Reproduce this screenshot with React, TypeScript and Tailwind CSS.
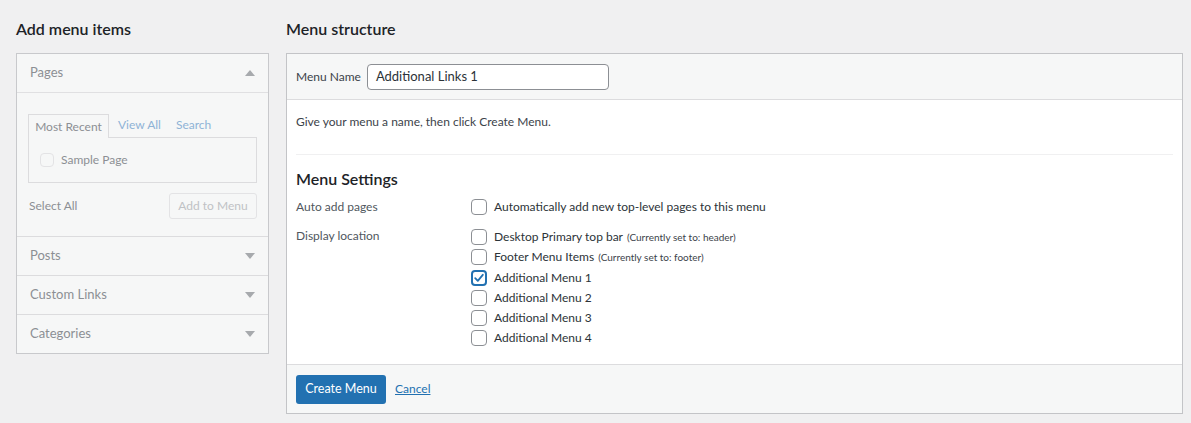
import React from "react";

const font = { fontFamily: 'Lato, "Noto Sans", sans-serif' };

const Caret = ({ up }: { up?: boolean }) => (
  <svg width="10" height="6" viewBox="0 0 10 6" className="text-[#a7aaad]">
    {up ? <path d="M0 6 L5 0 L10 6 Z" fill="currentColor" /> : <path d="M0 0 L10 0 L5 6 Z" fill="currentColor" />}
  </svg>
);

const Checkbox = ({ checked }: { checked?: boolean }) => (
  <span
    className={`w-4 h-4 shrink-0 rounded-[4px] bg-white flex items-center justify-center ${
      checked ? "border-2 border-[#2271b1]" : "border border-[#8c8f94]"
    }`}
  >
    {checked && (
      <svg width="12" height="12" viewBox="0 0 12 12">
        <path d="M2.2 6.2 L4.8 8.8 L9.8 2.8" fill="none" stroke="#2271b1" strokeWidth="1.8" strokeLinecap="round" strokeLinejoin="round" />
      </svg>
    )}
  </span>
);

const locations = [
  { label: "Desktop Primary top bar", note: "(Currently set to: header)" },
  { label: "Footer Menu Items", note: "(Currently set to: footer)" },
  { label: "Additional Menu 1", checked: true },
  { label: "Additional Menu 2" },
  { label: "Additional Menu 3" },
  { label: "Additional Menu 4" },
];

export default function App() {
  return (
    <div className="w-[1191px] h-[423px] bg-[#f0f0f1] text-[#2c3338] text-[12px] flex pl-4 pr-2 overflow-hidden" style={font}>
      {/* Left column */}
      <div className="w-[253px] shrink-0">
        <h2 className="text-[16px] font-semibold text-[#1d2327] h-[53px] pt-[19px] leading-[20px]">Add menu items</h2>
        <div className="border border-[#c8c9cc] bg-[#f6f7f7] text-[#8c8f94]">
          <div className="h-[39px] px-[13px] flex items-center justify-between border-b border-[#e0e0e2]">
            <span className="text-[13px]">Pages</span>
            <Caret up />
          </div>
          <div className="px-[11px] pt-[21px] pb-[17px] border-b border-[#dcdcde]">
            <div className="flex items-end">
              <div className="h-[24px] w-[81px] border border-b-0 border-[#dcdcde] bg-[#f6f7f7] flex items-center justify-center -mb-px relative z-10">Most Recent</div>
              <span className="ml-[9px] mb-[3px] text-[#8fb3d6]">View All</span>
              <span className="ml-[15px] mb-[3px] text-[#8fb3d6]">Search</span>
            </div>
            <div className="h-[46px] border border-[#dcdcde] px-[11px] flex items-center">
              <span className="w-[14px] h-[14px] rounded-[4px] border border-[#e3e3e5] bg-[#f6f7f7]" />
              <span className="ml-[7px]">Sample Page</span>
            </div>
            <div className="mt-[10px] flex items-center justify-between">
              <span className="ml-px">Select All</span>
              <span className="h-[26px] w-[88px] border border-[#e3e3e5] rounded-[3px] bg-[#f6f7f7] text-[#c0c2c5] flex items-center justify-center">Add to Menu</span>
            </div>
          </div>
          {["Posts", "Custom Links", "Categories"].map((t, i) => (
            <div key={t} className={`px-[13px] flex items-center justify-between ${i < 2 ? "h-[39px] border-b border-[#dcdcde]" : "h-[38px]"}`}>
              <span className="text-[13px]">{t}</span>
              <Caret />
            </div>
          ))}
        </div>
      </div>

      {/* Right column */}
      <div className="flex-1 ml-[17px]">
        <h2 className="text-[16px] font-semibold text-[#1d2327] h-[53px] pt-[19px] leading-[20px]">Menu structure</h2>
        <div className="border border-[#c3c4c7] bg-white">
          <div className="h-[46px] bg-[#f6f7f7] border-b border-[#dcdcde] px-[9px] flex items-center">
            <span className="text-[#3c434a]">Menu Name</span>
            <div className="ml-[6px] w-[242px] h-[26px] border border-[#8c8f94] rounded-[4px] bg-white px-2 flex items-center text-[13px] text-[#2c3338]">
              Additional Links 1
            </div>
          </div>
          <div className="px-[9px]">
            <p className="pt-[12px] pb-[22px] leading-[20px] text-[#3c434a]">Give your menu a name, then click Create Menu.</p>
            <div className="border-t border-[#f0f0f1]" />
            <h3 className="text-[16px] font-semibold text-[#1d2327] pt-[13px] leading-[22px]">Menu Settings</h3>
            <div className="flex mt-[9px]">
              <div className="w-[175px] leading-[16px] text-[#50575e]">Auto add pages</div>
              <label className="flex items-center gap-[7px] leading-[16px]">
                <Checkbox />
                <span>Automatically add new top-level pages to this menu</span>
              </label>
            </div>
            <div className="flex mt-[14px] pb-[18px]">
              <div className="w-[175px] leading-[16px] -mt-px text-[#50575e]">Display location</div>
              <div className="flex flex-col gap-[4.25px]">
                {locations.map((l) => (
                  <label key={l.label} className="flex items-center gap-[7px] h-4 leading-[16px]">
                    <Checkbox checked={l.checked} />
                    <span>
                      {l.label}
                      {l.note && <span className="text-[10px] ml-1 text-[#3c434a]">{l.note}</span>}
                    </span>
                  </label>
                ))}
              </div>
            </div>
          </div>
          <div className="h-[49px] bg-[#f6f7f7] border-t border-[#dcdcde] px-[9px] flex items-center gap-[9px]">
            <button className="h-[29px] w-[90px] bg-[#2271b1] text-white rounded-[3px] text-[12.5px]">Create Menu</button>
            <a href="#" className="text-[#2271b1] underline">Cancel</a>
          </div>
        </div>
      </div>
    </div>
  );
}
